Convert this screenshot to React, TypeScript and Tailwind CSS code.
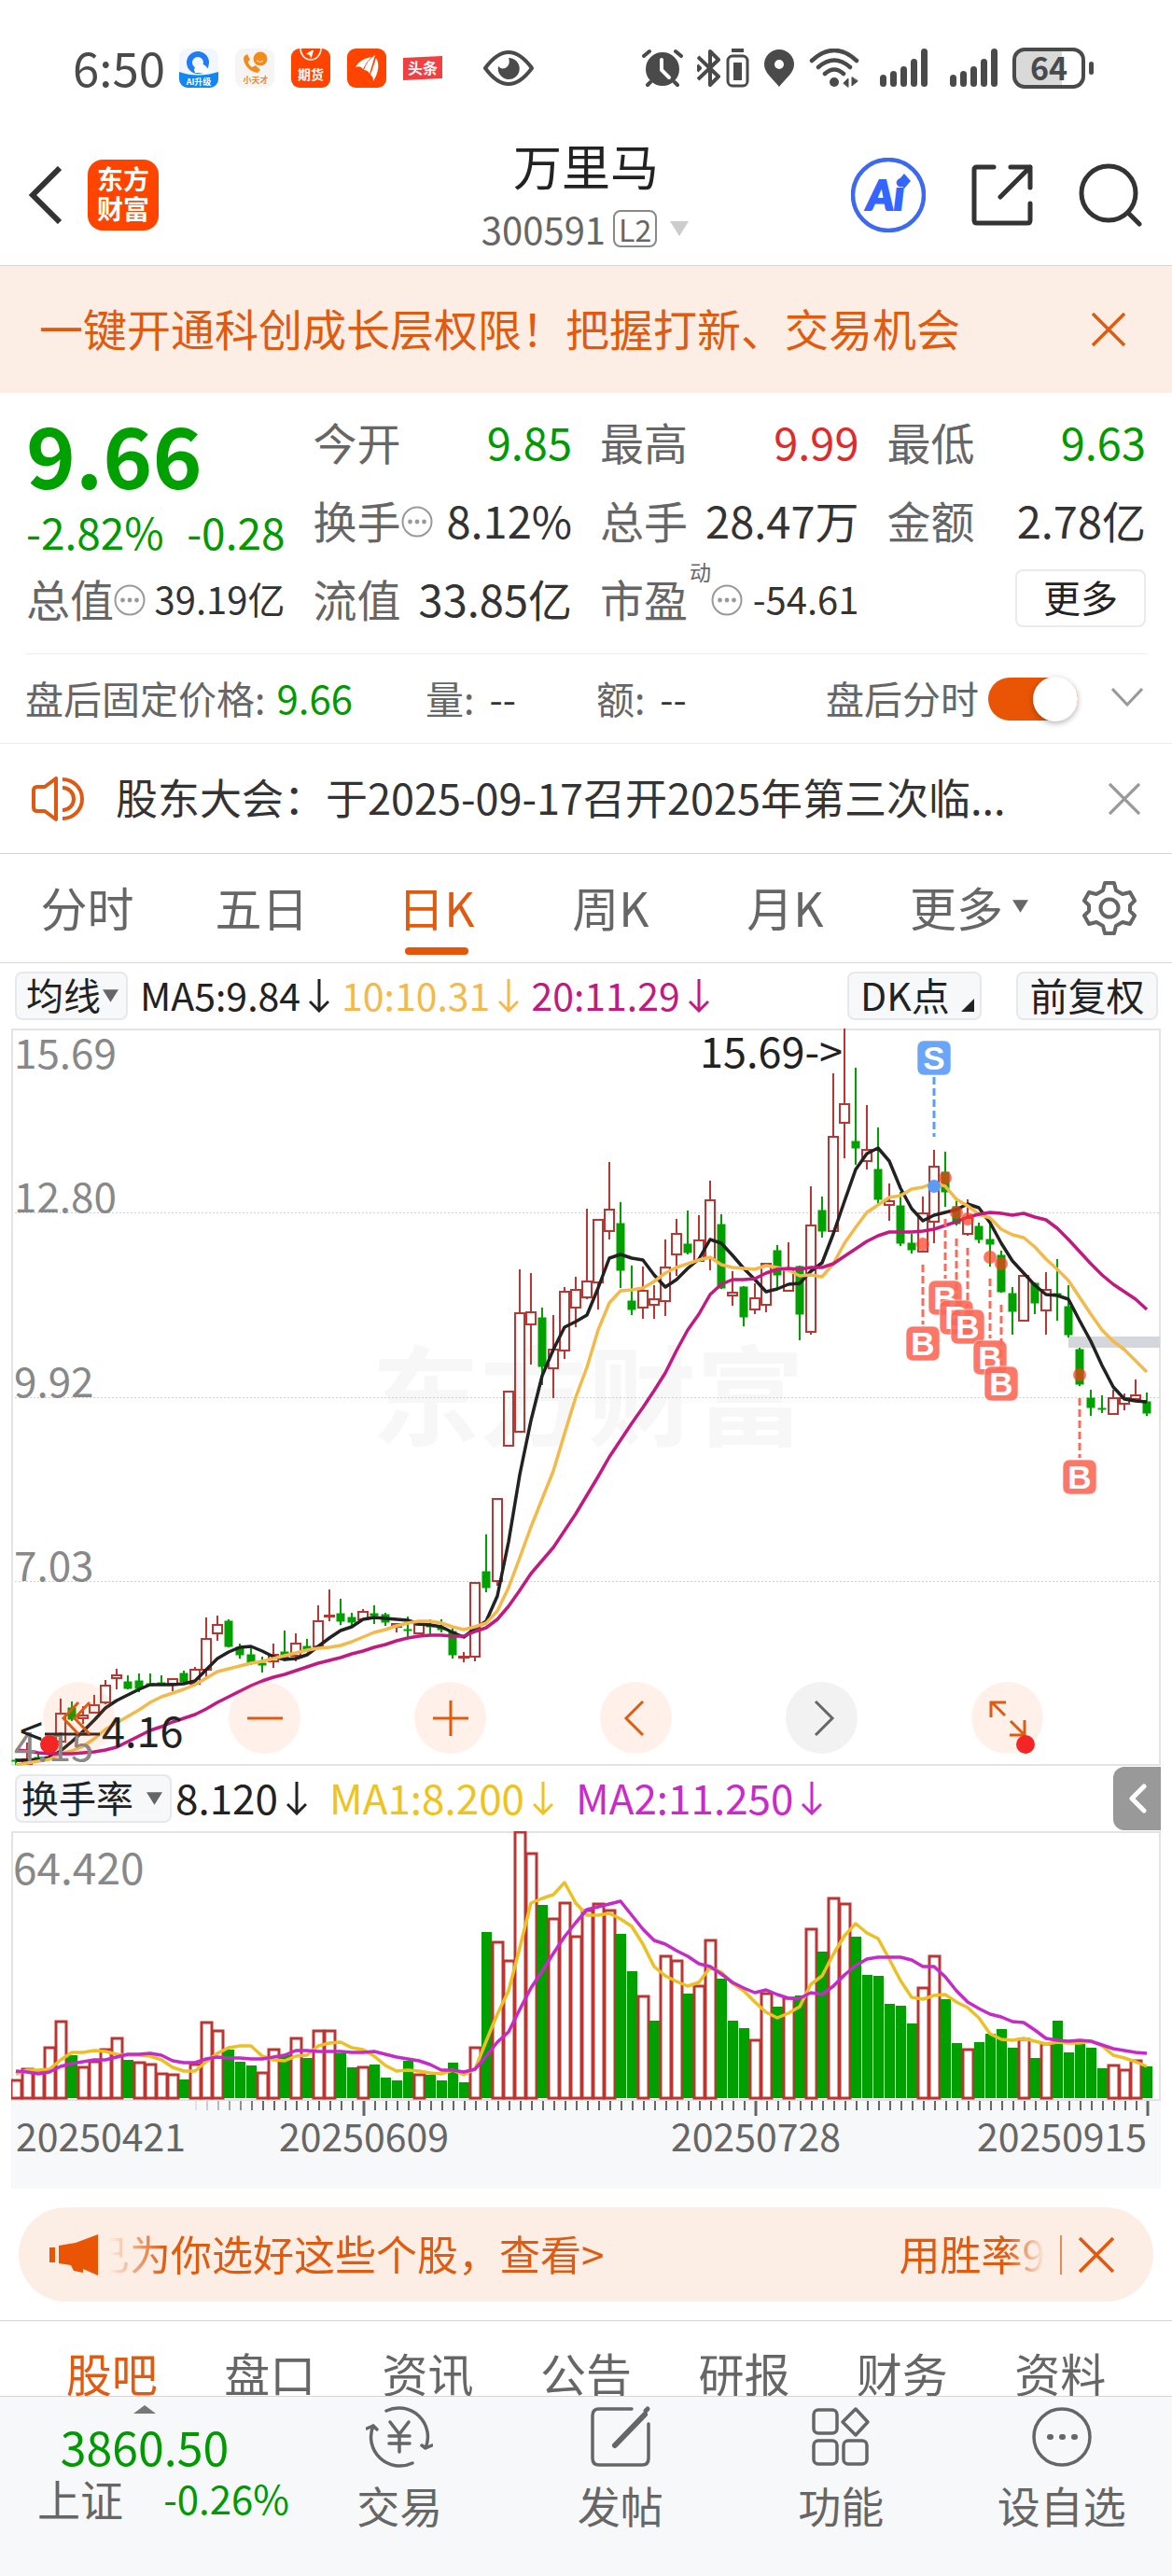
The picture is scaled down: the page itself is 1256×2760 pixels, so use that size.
import { useState, type ReactNode } from 'react';

// one row per trading day: [high, body top, body bottom, low, rising]
type Candle = [number, number, number, number, 0 | 1];

const CANDLES: Candle[] = [
  [782, 784, 785, 789, 0], [765, 783, 788, 788, 1], [777, 781, 784, 786, 0], [758, 762, 777, 780, 1],
  [718, 734, 764, 768, 1], [721, 728, 740, 742, 0], [726, 736, 739, 745, 1], [714, 725, 733, 734, 1],
  [698, 704, 722, 724, 1], [686, 693, 696, 708, 1], [693, 700, 707, 708, 0], [691, 699, 707, 711, 0],
  [691, 702, 704, 704, 0], [693, 701, 703, 704, 0], [696, 697, 702, 710, 1], [688, 691, 700, 701, 0],
  [684, 687, 702, 703, 1], [631, 654, 687, 695, 1], [629, 639, 648, 656, 1], [633, 635, 662, 663, 0],
  [659, 663, 671, 675, 0], [663, 671, 680, 682, 0], [673, 680, 682, 690, 0], [659, 671, 678, 685, 1],
  [645, 668, 675, 678, 0], [648, 659, 672, 678, 1], [654, 662, 666, 668, 0], [618, 635, 662, 663, 1],
  [601, 629, 630, 635, 1], [611, 627, 635, 639, 0], [626, 631, 636, 642, 0], [622, 625, 633, 634, 1],
  [618, 627, 629, 638, 0], [626, 628, 636, 640, 0], [637, 638, 641, 647, 1], [630, 644, 645, 652, 0],
  [637, 639, 648, 649, 1], [633, 639, 641, 649, 0], [633, 642, 644, 647, 0], [642, 646, 671, 675, 0],
  [668, 673, 674, 679, 1], [593, 594, 673, 678, 1], [542, 582, 599, 604, 0], [503, 504, 592, 597, 1],
  [389, 389, 447, 447, 1], [258, 305, 432, 432, 1], [262, 304, 317, 360, 1], [299, 310, 362, 382, 0],
  [307, 344, 364, 396, 1], [277, 282, 345, 354, 1], [266, 280, 299, 320, 1], [193, 271, 288, 290, 1],
  [205, 205, 272, 301, 1], [143, 194, 217, 226, 1], [186, 209, 259, 278, 0], [254, 292, 301, 307, 0],
  [255, 281, 299, 311, 1], [275, 290, 296, 311, 1], [226, 256, 292, 308, 1], [204, 220, 242, 265, 1],
  [195, 231, 240, 242, 0], [200, 227, 249, 250, 1], [163, 184, 246, 259, 1], [199, 210, 278, 279, 0],
  [260, 283, 286, 297, 1], [276, 277, 309, 319, 0], [273, 289, 301, 306, 1], [251, 252, 296, 304, 1],
  [232, 238, 264, 279, 0], [229, 257, 281, 282, 1], [254, 255, 306, 334, 0], [169, 211, 325, 328, 1],
  [180, 195, 217, 224, 0], [48, 116, 217, 218, 1], [0, 81, 101, 139, 1], [42, 121, 128, 146, 0],
  [82, 130, 142, 151, 1], [106, 151, 183, 189, 0], [166, 185, 189, 206, 1], [175, 190, 230, 233, 0],
  [220, 230, 237, 241, 0], [180, 198, 239, 240, 1], [130, 148, 207, 230, 1], [132, 154, 175, 191, 0],
  [181, 191, 209, 211, 0], [183, 203, 220, 222, 1], [208, 212, 226, 230, 0], [209, 226, 231, 255, 0],
  [238, 243, 282, 283, 0], [277, 284, 303, 328, 0], [264, 265, 313, 314, 1], [272, 273, 294, 306, 0],
  [261, 280, 302, 328, 1], [247, 284, 285, 313, 0], [275, 298, 328, 331, 0], [342, 344, 381, 383, 0],
  [387, 396, 406, 415, 0], [393, 407, 408, 412, 0], [387, 396, 413, 413, 1], [391, 396, 402, 409, 1],
  [376, 393, 397, 398, 1], [390, 400, 412, 415, 0],
];

const MA5 = [
  784, 784, 783, 781, 774, 764, 753, 741, 728, 720, 714, 708, 703, 703, 703, 702, 699, 687, 675, 668,
  663, 662, 667, 673, 676, 675, 671, 662, 653, 645, 641, 633, 631, 632, 633, 634, 638, 639, 641, 647,
  652, 643, 635, 608, 550, 478, 420, 372, 344, 320, 314, 307, 278, 246, 242, 246, 248, 264, 277, 269,
  257, 247, 226, 230, 243, 257, 269, 282, 279, 274, 273, 260, 251, 220, 185, 151, 134, 128, 142, 171,
  193, 206, 200, 197, 194, 188, 192, 208, 230, 249, 262, 275, 285, 286, 290, 313, 335, 361, 384, 397,
  399, 400,
];

const MA10 = [
  789, 787, 785, 783, 777, 774, 769, 761, 751, 744, 737, 730, 722, 716, 712, 708, 703, 696, 689, 686,
  683, 680, 678, 675, 672, 669, 666, 664, 663, 661, 657, 652, 647, 644, 640, 637, 635, 635, 637, 641,
  644, 641, 637, 624, 599, 567, 534, 504, 474, 434, 395, 363, 323, 294, 281, 280, 278, 271, 262, 256,
  252, 248, 245, 253, 256, 257, 258, 254, 256, 259, 265, 264, 266, 252, 230, 213, 197, 189, 181, 179,
  172, 170, 165, 169, 183, 190, 199, 203, 215, 221, 224, 234, 247, 258, 270, 288, 306, 323, 335, 344,
  356, 368,
];

const MA20 = [
  773, 774, 776, 777, 777, 777, 776, 775, 773, 770, 764, 758, 752, 748, 743, 739, 735, 729, 722, 716,
  710, 704, 699, 695, 692, 688, 684, 680, 677, 674, 670, 667, 663, 660, 656, 653, 651, 650, 650, 651,
  651, 646, 642, 633, 619, 602, 584, 570, 556, 538, 520, 500, 480, 459, 441, 423, 406, 388, 369, 345,
  323, 306, 285, 274, 269, 269, 268, 262, 258, 257, 258, 256, 256, 252, 244, 236, 228, 222, 218, 218,
  218, 217, 215, 211, 207, 202, 199, 197, 198, 200, 198, 202, 205, 214, 226, 239, 252, 264, 274, 282,
  290, 301,
];

// bar tops, negative for a falling day
const TURNOVER = [
  267, 255, 257, 232, 204, -240, 253, 247, 234, 222, -245, 248, 250, 260, 261, -266, 250, 205, 214, -234,
  -247, -251, 259, 234, -240, 222, -243, 214, 214, -238, -253, 253, -250, -264, -267, -246, 261, -261, -267, -248,
  -269, 232, -108, 119, 139, 1, 24, -79, 94, 77, 113, 85, 78, 85, -110, -150, 177, -203, 134, 139,
  -174, 166, 117, -158, -203, -211, 224, 174, -188, 179, -176, 105, -129, 72, 78, -113, -154, -155, -185, -187,
  -206, 168, 134, -180, -227, 234, -226, -217, -212, -232, 223, -243, 228, -203, -237, -228, -232, -254, 251, 256,
  246, -252,
];

const TURNOVER_MA1 = [
  260, 256, 256, 255, 245, 237, 237, 235, 236, 239, 240, 240, 241, 245, 253, 257, 257, 247, 238, 232,
  230, 230, 241, 245, 246, 241, 240, 230, 227, 226, 232, 234, 241, 251, 257, 256, 257, 259, 260, 256,
  261, 255, 225, 196, 171, 125, 77, 72, 68, 55, 77, 90, 90, 88, 94, 102, 121, 145, 155, 161,
  166, 162, 146, 151, 163, 171, 183, 194, 200, 195, 188, 164, 155, 132, 112, 99, 109, 115, 137, 160,
  178, 180, 176, 175, 183, 189, 200, 217, 223, 224, 222, 225, 228, 226, 227, 227, 225, 230, 240, 243,
  247, 252,
];

const TURNOVER_MA2 = [
  257, 258, 260, 258, 252, 249, 247, 245, 245, 242, 239, 239, 238, 240, 246, 248, 248, 244, 242, 243,
  243, 244, 244, 242, 240, 235, 235, 236, 236, 236, 237, 237, 236, 239, 242, 244, 246, 250, 256, 256,
  258, 255, 241, 226, 215, 191, 168, 150, 131, 113, 98, 84, 81, 78, 75, 90, 105, 117, 121, 128,
  134, 142, 145, 153, 162, 168, 173, 170, 175, 179, 179, 173, 175, 166, 154, 144, 137, 135, 135, 135,
  138, 145, 145, 156, 171, 183, 190, 196, 199, 204, 205, 213, 222, 224, 225, 224, 225, 229, 233, 235,
  237, 238,
];

// [day index, badge top, dot y]
const BUY_MARKS = [
  [81, 319, 231],
  [83, 270, 160],
  [84, 291, 197],
  [85, 301, 204],
  [87, 334, 245],
  [88, 362, 252],
  [95, 462, 371],
];

const RED = '#bb3633';
const GREEN = '#00a000';

const dayX = (i: number) => 5 + i * 12;

const linePoints = (values: number[]) => values.map((y, i) => `${dayX(i)},${y}`).join(' ');

const Line = ({ values, color }: { values: number[]; color: string }) => (
  <polyline points={linePoints(values)} fill="none" stroke={color} strokeWidth="3.500" strokeLinejoin="round" />
);

/* ---------- small icons ---------- */

const Cross = ({ className }: { className: string }) => (
  <svg viewBox="0 0 36 36" className={className} fill="none" stroke="currentColor" strokeWidth="3.500">
    <path d="M1 1L35 35M35 1L1 35" />
  </svg>
);

const DownArrow = () => (
  <svg viewBox="0 0 22 36" className="h-9 w-[22px]" fill="none" stroke="currentColor" strokeWidth="3">
    <path d="M11 0V34M1 24L11 34L21 24" />
  </svg>
);

const Caret = ({ className }: { className: string }) => (
  <svg viewBox="0 0 20 16" className={className} fill="currentColor">
    <path d="M0 0H20L10 16Z" />
  </svg>
);

const InfoDots = () => (
  <svg viewBox="0 0 34 34" className="mt-1 size-[34px] shrink-0 text-[#999]" fill="currentColor">
    <circle cx="17" cy="17" r="15.500" fill="none" stroke="currentColor" strokeWidth="2" />
    <circle cx="9.500" cy="17" r="2.400" />
    <circle cx="17" cy="17" r="2.400" />
    <circle cx="24.500" cy="17" r="2.400" />
  </svg>
);

const Signal = () => (
  <svg viewBox="0 0 52 42" className="h-[42px] w-[52px]" fill="currentColor">
    <rect x="0" y="28" width="7" height="13" rx="3.500" />
    <rect x="11" y="24" width="7" height="17" rx="3.500" />
    <rect x="22" y="19" width="7" height="22" rx="3.500" />
    <rect x="33" y="11" width="7" height="30" rx="3.500" />
    <rect x="44" y="0" width="7" height="41" rx="3.500" />
  </svg>
);

const StatusBar = () => (
  <div className="flex h-[98px] items-center justify-between pt-[48px] pr-[84px] pl-[78px] text-[#4a4a4a]">
    <div className="flex items-center">
      <span className="w-[114px] pb-1 text-[51px] leading-[50px]">6:50</span>
      <div className="flex items-center gap-[18px]">
        <svg viewBox="0 0 42 42" className="size-[42px]">
          <rect width="42" height="42" rx="9" fill="#f2f7ff" />
          <circle cx="20" cy="15" r="9" fill="none" stroke="#1f7cf5" strokeWidth="6" />
          <path d="M17 26a5 5 0 0 1 4-8 6 6 0 0 1 9 3 4 4 0 0 1 1 5z" fill="#fff" />
          <path d="M0 25Q20 32 42 25V33a9 9 0 0 1-9 9H9a9 9 0 0 1-9-9z" fill="#1287f2" />
          <text x="21" y="39" fontSize="9" fontWeight="700" fill="#fff" textAnchor="middle">AI升级</text>
        </svg>
        <svg viewBox="0 0 42 42" className="size-[42px]">
          <rect width="42" height="42" rx="9" fill="#f6f5f4" />
          <path d="M10 8c-3 4 2 16 14 18l3-3-5-5-4 2c-2-1-4-4-4-6l2-2-3-6z" fill="#f28a1c" />
          <circle cx="27" cy="11" r="7.500" fill="#f28a1c" />
          <path d="M23 13q4 3 7 0" stroke="#fff" fill="none" />
          <text x="22" y="37" fontSize="9" fontWeight="700" fill="#f28a1c" textAnchor="middle">小天才</text>
        </svg>
        <svg viewBox="0 0 42 42" className="size-[42px]">
          <rect width="42" height="42" rx="9" fill="#ff4400" />
          <path d="M10 0a11 12 0 0 0 22 0" fill="none" stroke="#fff" strokeWidth="1.500" />
          <path d="M16 6q7-5 8-4-2 8-3 9 0-5-5-5" fill="#fff" />
          <text x="21" y="33" fontSize="14" fontWeight="700" fill="#fff" textAnchor="middle">期货</text>
        </svg>
        <svg viewBox="0 0 42 42" className="size-[42px]">
          <rect width="42" height="42" rx="9" fill="#ff4400" />
          <path d="M9 20Q12 12 26 9Q20 15 17 22Q14 18 9 20zM18 23Q21 13 30 7Q27 17 24 27Q22 23 18 23zM25 28Q29 17 31 10Q37 20 28 35Q28 30 25 28z" fill="#fff" />
        </svg>
        <svg viewBox="0 0 42 42" className="size-[42px]">
          <path d="M0 10L42 8V32L0 34z" fill="#f04142" />
          <text x="21" y="27" fontSize="16" fontWeight="700" fill="#fff" textAnchor="middle">头条</text>
        </svg>
      </div>
      <svg viewBox="0 0 54 38" className="ml-[44px] h-[38px] w-[54px]">
        <path d="M2 19Q27-15 52 19Q27 53 2 19z" fill="none" stroke="currentColor" strokeWidth="4" strokeLinejoin="round" />
        <path d="M27 8a11.500 11.500 0 1 1-11 9q5 5 10 0 3-4 1-9z" fill="currentColor" />
      </svg>
    </div>

    <div className="flex items-center">
      <svg viewBox="0 0 44 42" className="h-[42px] w-[44px]" fill="none" stroke="currentColor" strokeWidth="4" strokeLinecap="round">
        <circle cx="22" cy="22" r="17" fill="currentColor" strokeWidth="2" />
        <path d="M2 8L8 3M42 8L36 3M9 36L6 39M35 36L38 39" />
        <path d="M21 12V23L29 31" stroke="#fff" strokeWidth="4" />
      </svg>
      <svg viewBox="0 0 26 42" className="ml-[15px] h-[42px] w-[26px]" fill="none" stroke="currentColor" strokeWidth="4" strokeLinejoin="round">
        <path d="M1 9L23 30L14 39V3L23 12L1 33" />
        <path d="M0 18L3 21L0 24" />
      </svg>
      <svg viewBox="0 0 26 42" className="ml-[5px] h-[42px] w-[26px]" fill="none" stroke="currentColor" strokeWidth="3">
        <rect x="2" y="8" width="21" height="32" rx="5" />
        <path d="M6 2H19" strokeWidth="4" />
        <rect x="8" y="15" width="9" height="19" fill="currentColor" stroke="none" />
      </svg>
      <svg viewBox="0 0 34 42" className="ml-[14px] h-[42px] w-[34px]">
        <path fillRule="evenodd" d="M17 1a16 16 0 0 1 16 16c0 9-9 15-16 24C10 32 1 26 1 17A16 16 0 0 1 17 1zm0 11a5 5 0 1 0 0 10 5 5 0 0 0 0-10z" fill="currentColor" />
      </svg>
      <svg viewBox="0 0 54 42" className="ml-[15px] h-[42px] w-[54px]" fill="none" stroke="currentColor" strokeWidth="4.500" strokeLinecap="round">
        <path d="M3 13Q27-9 51 13M10 20Q27 5 44 20M17 27Q27 18 37 27" />
        <circle cx="27" cy="36" r="5" fill="currentColor" stroke="none" />
        <path d="M42 41V32L37 37zM46 31V40L52 35z" fill="currentColor" strokeWidth="1" />
      </svg>
      <div className="ml-[22px] flex gap-[23px]">
        <Signal />
        <Signal />
      </div>
      <div className="ml-[15px] flex items-center gap-1">
        <div className="flex h-[44px] w-[78px] items-center justify-center rounded-[13px] border-4 border-[#4a4a4a] bg-linear-to-r from-[#d9d9d9] from-70% to-white to-70% pb-[2px] text-[34px] leading-[34px] font-bold">
          64
        </div>
        <div className="h-[14px] w-[5px] rounded-full bg-[#4a4a4a]" />
      </div>
    </div>
  </div>
);

const Header = () => (
  <header className="grid h-[187px] grid-cols-[1fr_auto_1fr] items-center border-b border-[#d5d5d5] pt-[36px] text-[#333]">
    <div className="flex items-center pl-[30px]">
      <button type="button" aria-label="返回">
        <svg viewBox="0 0 36 62" className="h-[62px] w-9" fill="none" stroke="currentColor" strokeWidth="6">
          <path d="M34 2L5 31L34 60" />
        </svg>
      </button>
      <a href="#home" className="ml-7 flex size-[76px] flex-col items-center justify-center rounded-2xl bg-[#ff4400] pb-1 text-[28px] leading-[32px] font-bold text-white">
        <span>东方</span>
        <span>财富</span>
      </a>
    </div>

    <div className="flex flex-col items-center gap-3 pb-1">
      <h1 className="text-[52px] leading-[64px] text-[#222]">万里马</h1>
      <button type="button" className="flex items-center text-[40px] leading-[48px] text-[#666]">
        300591
        <span className="ml-2 rounded-lg border-2 border-[#888] px-1 text-[32px] leading-[36px]">L2</span>
        <Caret className="ml-3 h-4 w-6 text-[#ccc]" />
      </button>
    </div>

    <div className="flex items-center justify-end gap-[49px] pr-[32px]">
      <button type="button" aria-label="AI">
        <svg viewBox="0 0 80 80" className="size-20">
          <circle cx="40" cy="40" r="38" fill="none" stroke="#3d68f0" strokeWidth="4.500" />
          <text x="37" y="56" fontSize="44" fontWeight="900" fontStyle="italic" fill="#3366ff" stroke="#3366ff" strokeWidth="2" textAnchor="middle" fontFamily="Lato, sans-serif">Ai</text>
          <path d="M57 17L64 25L57 33L50 25z" fill="#3366ff" />
        </svg>
      </button>
      <button type="button" aria-label="分享">
        <svg viewBox="0 0 66 66" className="size-[66px]" fill="none" stroke="currentColor" strokeWidth="5" strokeLinecap="round" strokeLinejoin="round">
          <path d="M24 3H6Q3 3 3 6V60Q3 63 6 63H60Q63 63 63 60V42M42 3H63V25M63 3L31 35" />
        </svg>
      </button>
      <button type="button" aria-label="搜索">
        <svg viewBox="0 0 68 68" className="size-[68px]" fill="none" stroke="currentColor" strokeWidth="5" strokeLinecap="round">
          <circle cx="32" cy="32" r="29" />
          <path d="M53 53L65 65" />
        </svg>
      </button>
    </div>
  </header>
);

const Banner = () => (
  <div className="flex h-[136px] items-center justify-between bg-[#fceee5] pr-[50px] pl-[42px] text-[#e05a10]">
    <a href="#growth" className="pb-1 text-[47px] leading-[60px] whitespace-nowrap">
      一键开通科创成长层权限！把握打新、交易机会
    </a>
    <button type="button" aria-label="关闭">
      <Cross className="size-9" />
    </button>
  </div>
);

/* ---------- quote ---------- */

interface QuoteCellProps {
  label: string;
  value: string;
  sup?: string;
  info?: boolean;
  small?: boolean;
  tone?: string;
}

const QuoteCell = ({ label, value, sup, info, small, tone = 'text-[#333]' }: QuoteCellProps) => (
  <div className="flex h-[84px] items-center justify-between whitespace-nowrap">
    <dt className="flex items-center text-[47px] leading-[60px] text-[#666]">
      {label}
      {sup && <sup className="-mt-9 ml-[2px] text-[23px] leading-[24px]">{sup}</sup>}
      {info && <InfoDots />}
    </dt>
    <dd className={`${tone} ${small ? 'text-[40px]' : 'text-[47px]'} leading-[60px]`}>{value}</dd>
  </div>
);

const Quote = () => (
  <section className="px-[28px]">
    <div className="grid grid-cols-4 gap-x-[30px] pt-[10px] pb-[17px]">
      <div>
        <p className="h-[108px] text-[90px] leading-[108px] font-bold text-[#00a000]">9.66</p>
        <p className="flex h-[60px] items-center justify-between text-[46px] leading-[60px] text-[#009a00]">
          <span>-2.82%</span>
          <span>-0.28</span>
        </p>
        <dl>
          <QuoteCell label="总值" info value="39.19亿" small />
        </dl>
      </div>
      <dl>
        <QuoteCell label="今开" value="9.85" tone="text-[#009a00]" />
        <QuoteCell label="换手" info value="8.12%" />
        <QuoteCell label="流值" value="33.85亿" />
      </dl>
      <dl>
        <QuoteCell label="最高" value="9.99" tone="text-[#dd2c2c]" />
        <QuoteCell label="总手" value="28.47万" />
        <QuoteCell label="市盈" sup="动" info value="-54.61" small />
      </dl>
      <div>
        <dl>
          <QuoteCell label="最低" value="9.63" tone="text-[#009a00]" />
          <QuoteCell label="金额" value="2.78亿" />
        </dl>
        <div className="flex h-[84px] items-center justify-end">
          <button type="button" className="h-[62px] w-[140px] rounded-lg border-2 border-[#e8eaec] pb-1 text-[40px] leading-[52px] text-[#222]">
            更多
          </button>
        </div>
      </div>
    </div>
  </section>
);

const AfterHours = () => {
  const [on, setOn] = useState(true);

  return (
    <section className="border-b border-[#ececec] text-[41px] leading-[60px] whitespace-nowrap text-[#666]">
      <div className="mx-[27px] flex h-[96px] items-center border-t border-[#ececec] pb-1">
        <span>盘后固定价格:</span>
        <span className="ml-3 text-[42px] text-[#009a00]">9.66</span>
        <span className="ml-[78px]">量:</span>
        <span className="ml-4 text-[#333]">--</span>
        <span className="ml-[86px]">额:</span>
        <span className="ml-4 text-[#333]">--</span>
        <label className="ml-auto flex items-center gap-[10px]">
          盘后分时
          <span className="relative mt-1 flex h-[46px] w-[96px] items-center">
            <input
              type="checkbox"
              checked={on}
              onChange={() => setOn(!on)}
              className="peer h-[46px] w-full appearance-none rounded-full bg-gray-300 checked:bg-[#e95504]"
            />
            <span className="pointer-events-none absolute left-0 size-[48px] rounded-full bg-white shadow-[0_2px_6px_rgba(0,0,0,0.3)] peer-checked:right-0 peer-checked:left-auto" />
          </span>
        </label>
        <button type="button" aria-label="展开" className="mr-1 ml-[36px]">
          <svg viewBox="0 0 34 20" className="h-5 w-[34px] text-[#999]" fill="none" stroke="currentColor" strokeWidth="3">
            <path d="M1 1L17 18L33 1" />
          </svg>
        </button>
      </div>
    </section>
  );
};

const Notice = () => (
  <section className="flex h-[118px] items-center border-b border-[#d5d5d5] pr-[34px] pl-[33px]">
    <svg viewBox="0 0 58 48" className="h-12 w-[58px] text-[#dc5a14]" fill="none" stroke="currentColor" strokeWidth="4" strokeLinejoin="round">
      <path d="M27 2V46L15 37H7Q3 37 3 33V15Q3 11 7 11H15z" />
      <path d="M34 12a12 12 0 0 1 0 24M34 3a21 21 0 0 1 0 42" />
    </svg>
    <a href="#notice" className="ml-[33px] pb-1 text-[45px] leading-[60px] whitespace-nowrap text-[#333]">
      股东大会：于2025-09-17召开2025年第三次临...
    </a>
    <button type="button" aria-label="关闭" className="ml-auto text-[#999]">
      <Cross className="size-[34px]" />
    </button>
  </section>
);

/* ---------- chart ---------- */

const PERIODS = ['分时', '五日', '日K', '周K', '月K'];

const PeriodTabs = () => {
  const [active, setActive] = useState('日K');

  return (
    <nav className="grid h-[117px] grid-cols-[repeat(6,187fr)_134fr] border-b border-[#d5d5d5] text-[50px] leading-[60px] text-[#666]">
      {PERIODS.map((p) => (
        <button
          key={p}
          type="button"
          onClick={() => setActive(p)}
          className={`flex flex-col items-center pt-[26px] whitespace-nowrap ${p === active ? 'text-[#e05a10]' : ''}`}
        >
          {p}
          {p === active && <span className="mt-[14px] h-2 w-[68px] rounded-full bg-[#e55608]" />}
        </button>
      ))}
      <button type="button" className="flex items-center justify-center gap-[10px] pb-1 pl-5 whitespace-nowrap">
        更多
        <Caret className="h-[14px] w-[17px]" />
      </button>
      <button type="button" aria-label="设置" className="flex items-center justify-center">
        <svg viewBox="0 0 58 58" className="size-[58px]" fill="none" stroke="currentColor" strokeWidth="4" strokeLinejoin="round">
          <path d="M24 2H34L36 10L43 14L51 12L56 21L51 26V32L56 37L51 46L43 44L36 48L34 56H24L22 48L15 44L7 46L2 37L7 32V26L2 21L7 12L15 14L22 10z" />
          <circle cx="29" cy="29" r="9.500" />
        </svg>
      </button>
    </nav>
  );
};

const IndicatorSelect = ({ label, options, className }: { label: string; options: string[]; className: string }) => (
  <label className={`relative flex h-[52px] items-center rounded-lg border-2 border-[#e6e8eb] bg-[#f7f8fa] text-[40px] text-[#222] ${className}`}>
    <select aria-label={label} className="h-full w-full appearance-none bg-transparent pb-1 leading-[44px] outline-none">
      {options.map((o) => (
        <option key={o}>{o}</option>
      ))}
    </select>
    <Caret className="pointer-events-none absolute right-2 h-[14px] w-[17px] text-[#666]" />
  </label>
);

const Reading = ({ color, children }: { color: string; children: ReactNode }) => (
  <span className={`flex items-center gap-[9px] ${color}`}>
    <span className="pb-1">{children}</span>
    <DownArrow />
  </span>
);

const PriceHeader = () => (
  <div className="flex h-[70px] items-center pr-[15px] pl-[16px] text-[41px] leading-[52px] whitespace-nowrap">
    <IndicatorSelect label="主图指标" options={['均线', '布林']} className="w-[121px] pl-[10px]" />
    <div className="ml-[13px] flex gap-[13px]">
      <Reading color="text-[#222]">MA5:9.84</Reading>
      <Reading color="text-[#f3ba4b]">10:10.31</Reading>
      <Reading color="text-[#c21a80]">20:11.29</Reading>
    </div>
    <button type="button" className="ml-auto flex h-[52px] w-[144px] items-center rounded-lg border-2 border-[#e6e8eb] bg-[#f7f8fa] pl-3 text-[41px] leading-[44px] text-[#222]">
      <span className="pb-1">DK点</span>
      <svg viewBox="0 0 14 14" className="mt-5 ml-3 size-[14px] shrink-0" fill="currentColor">
        <path d="M14 0V14H0z" />
      </svg>
    </button>
    <button type="button" className="ml-[37px] h-[52px] w-[152px] rounded-lg border-2 border-[#e6e8eb] bg-[#f7f8fa] pb-1 text-[41px] leading-[44px] text-[#222]">
      前复权
    </button>
  </div>
);

const TradeMark = ({ day, top, dot, kind }: { day: number; top: number; dot: number; kind: 'B' | 'S' }) => {
  const x = dayX(day);
  const color = kind === 'B' ? '#fb6a58' : '#5a9cf8';
  const [from, to] = kind === 'B' ? [top - 66, top - 2] : [top + 39, top + 103];

  return (
    <g>
      <path d={`M${x} ${from}V${to}`} stroke={color} strokeWidth="3" strokeDasharray="8 4" />
      <circle cx={x} cy={dot} r="7" fill={kind === 'B' ? '#ff3b1f' : color} opacity={kind === 'B' ? 0.7 : 1} />
      <rect x={x - 18} y={top} width="36" height="37" rx="7" fill={color} stroke="#fff" strokeOpacity="0.6" opacity="0.9" />
      <text x={x} y={top + 31} fontSize="35" fontWeight="700" fill="#fff" textAnchor="middle" fontFamily="Liberation Sans, sans-serif">
        {kind}
      </text>
    </g>
  );
};

const PriceChart = () => (
  <svg viewBox="0 0 1232 790" className="block w-full">
    <g fontSize="116" fontWeight="700" fill="#f7f7f7">
      <text x="386" y="438">东方财富</text>
    </g>
    {[197, 395, 592].map((y) => (
      <path key={y} d={`M0 ${y}.500H1232`} stroke="#d0d0d0" strokeDasharray="2 2" />
    ))}
    <path d="M1 0V790M1231 0V790M0 1H1232M0 789H1232" stroke="#e3e3e3" strokeWidth="2" />
    <rect x="1133" y="330" width="98" height="12" fill="#d3d7dc" />

    {CANDLES.map(([high, top, bottom, low, up], i) => {
      const x = dayX(i);
      const color = up ? RED : GREEN;
      return (
        <g key={i} stroke={color} strokeWidth="2">
          <path d={`M${x} ${high}V${top}M${x} ${bottom}V${low}`} />
          {up ? (
            <rect x={x - 5} y={top} width="10" height={Math.max(bottom - top, 1)} fill="none" />
          ) : (
            <rect x={x - 4} y={top} width="8" height={Math.max(bottom - top, 1)} fill={color} strokeWidth="1" />
          )}
        </g>
      );
    })}

    <Line values={MA5} color="#222" />
    <Line values={MA10} color="#f3ba4b" />
    <Line values={MA20} color="#c21a80" />

    <g fontSize="44" fill="#888">
      <text x="3" y="43">15.69</text>
      <text x="3" y="197">12.80</text>
      <text x="3" y="395">9.92</text>
      <text x="3" y="592">7.03</text>
      <text x="3" y="785">4.15</text>
    </g>

    {BUY_MARKS.map(([day, top, dot]) => (
      <TradeMark key={day} day={day} top={top} dot={dot} kind="B" />
    ))}
    <TradeMark day={82} top={13} dot={169} kind="S" />

    <g fontSize="45" fill="#222">
      <text x="891" y="42" textAnchor="end">15.69-&gt;</text>
      <text x="9" y="770">&lt;</text>
      <path d="M36 756H95" stroke="#222" strokeWidth="3" />
      <text x="97" y="770">4.16</text>
    </g>
  </svg>
);

const RoundButton = ({ label, muted, children }: { label: string; muted?: boolean; children: ReactNode }) => (
  <button
    type="button"
    aria-label={label}
    className={`relative flex size-[77px] items-center justify-center rounded-full ${muted ? 'bg-[#f2f2f2] text-[#666]' : 'bg-[#ff7832]/10 text-[#e05a10]'}`}
  >
    <svg viewBox="0 0 40 40" className="size-10" fill="none" stroke="currentColor" strokeWidth="3">
      {children}
    </svg>
  </button>
);

const ChartControls = () => (
  <div className="absolute bottom-[13px] left-[2.800%] flex w-[87%] justify-between">
    <div className="relative">
      <RoundButton label="最早">
        <path d="M19 3L3 20L19 37M31 3L15 20L31 37" />
      </RoundButton>
      <span className="absolute bottom-0 -left-[3px] size-5 rounded-full bg-[#f42525]" />
    </div>
    <RoundButton label="缩小">
      <path d="M1 20H39" />
    </RoundButton>
    <RoundButton label="放大">
      <path d="M1 20H39M20 1V39" />
    </RoundButton>
    <RoundButton label="左移">
      <path d="M27 2L9 20L27 38" />
    </RoundButton>
    <RoundButton label="右移" muted>
      <path d="M13 2L31 20L13 38" />
    </RoundButton>
    <div className="relative">
      <RoundButton label="全屏">
        <path d="M2 19V3H18M3 3L17 17M38 22V38H22M38 38L23 23" />
      </RoundButton>
      <span className="absolute right-[9px] bottom-0 size-5 rounded-full bg-[#f42525]" />
    </div>
  </div>
);

const TurnoverHeader = () => (
  <div className="flex h-[70px] items-center pr-[12px] pl-[16px] text-[44px] leading-[52px] whitespace-nowrap">
    <IndicatorSelect label="副图指标" options={['换手率', '成交量']} className="w-[168px] pl-[5px]" />
    <div className="ml-1 flex gap-6">
      <Reading color="text-[#222]">8.120</Reading>
      <Reading color="text-[#efc31f]">MA1:8.200</Reading>
      <Reading color="text-[#cb2acb]">MA2:11.250</Reading>
    </div>
    <button type="button" aria-label="展开侧栏" className="ml-auto flex h-[68px] w-[51px] items-center justify-center rounded-l-xl bg-[#999] text-white">
      <svg viewBox="0 0 20 32" className="h-8 w-5" fill="none" stroke="currentColor" strokeWidth="5" strokeLinecap="round" strokeLinejoin="round">
        <path d="M17 3L4 16L17 29" />
      </svg>
    </button>
  </div>
);

const MAJOR_TICKS = [31, 66, 101];

const TurnoverChart = () => (
  <svg viewBox="0 0 1232 383" className="block w-full">
    <rect y="288" width="1232" height="95" fill="#f7f8fa" />
    <path d="M1 0V288M1231 0V288M0 1H1232M0 288H1232" stroke="#e3e3e3" strokeWidth="2" />
    <text x="2" y="57" fontSize="46" fill="#888">64.420</text>

    {TURNOVER.map((v, i) =>
      v > 0 ? (
        <rect key={i} x={dayX(i) - 5} y={v} width="11" height={286 - v} fill="#fff" stroke={RED} strokeWidth="3" />
      ) : (
        <rect key={i} x={dayX(i) - 5} y={-v} width="11" height={286 + v} fill={GREEN} />
      ),
    )}
    <Line values={TURNOVER_MA1} color="#ecc024" />
    <Line values={TURNOVER_MA2} color="#c42bc8" />

    {TURNOVER.map((_, i) => {
      if (i < 16) return null;
      const major = MAJOR_TICKS.includes(i);
      return (
        <path
          key={i}
          d={`M${dayX(i) + 1} 289V${major ? 305 : 299}`}
          stroke="#666"
          strokeWidth={major ? 3 : 2}
          opacity={i < 22 ? (i - 15) / 7 : 1}
        />
      );
    })}
    <g fontSize="41" fill="#666">
      <text x="5" y="343">20250421</text>
      <text x="378" y="343" textAnchor="middle">20250609</text>
      <text x="798" y="343" textAnchor="middle">20250728</text>
      <text x="1217" y="343" textAnchor="end">20250915</text>
    </g>
  </svg>
);

/* ---------- bottom ---------- */

const Promo = () => (
  <section className="border-b border-[#d5d5d5] px-5 py-5">
    <div className="flex h-[101px] items-center rounded-full bg-[#fceee5] pr-[42px] pl-[33px] text-[#e05a10]">
      <svg viewBox="0 0 52 44" className="h-11 w-[52px] shrink-0" fill="#ea5504">
        <path d="M0 14H6V30H0zM10 12L28 9L52 0V44L36 37V41L26 39L23 33L10 31z" />
      </svg>
      <div className="ml-3 flex min-w-0 flex-1 justify-between overflow-hidden pb-1 text-[44px] leading-[60px] whitespace-nowrap [mask-image:linear-gradient(to_right,transparent,black_60px,black_calc(100%-40px),transparent)]">
        <a href="#picks" className="-ml-[22px]">已为你选好这些个股，查看&gt;</a>
        <a href="#winrate">用胜率9</a>
      </div>
      <span className="ml-4 h-[42px] w-[2px] bg-[#e58a58]" />
      <button type="button" aria-label="关闭" className="ml-[18px]">
        <Cross className="size-[38px]" />
      </button>
    </div>
  </section>
);

const SECTIONS = ['股吧', '盘口', '资讯', '公告', '研报', '财务', '资料'];

const SectionTabs = () => (
  <nav className="grid h-[80px] grid-cols-7 overflow-hidden px-[35px] pt-[25px] text-[49px] leading-[60px] whitespace-nowrap text-[#666]">
    {SECTIONS.map((s, i) => (
      <button key={s} type="button" className={`h-[60px] ${i === 0 ? 'text-[#e05a10]' : ''}`}>
        {s}
      </button>
    ))}
  </nav>
);

const FooterButton = ({ label, children }: { label: string; children: ReactNode }) => (
  <button type="button" className="flex flex-1 flex-col items-center pt-[9px] text-[46px] leading-[60px] whitespace-nowrap text-[#666]">
    <svg viewBox="0 0 72 68" className="mb-2 h-[68px] w-[72px]" fill="none" stroke="currentColor" strokeWidth="3.500" strokeLinecap="round" strokeLinejoin="round">
      {children}
    </svg>
    {label}
  </button>
);

const Footer = () => (
  <footer className="flex h-[193px] border-t border-[#d5d5d5] bg-[#f7f8fa]">
    <a href="#index" className="flex w-[310px] flex-col items-center pt-[9px] whitespace-nowrap">
      <svg viewBox="0 0 24 9" className="h-[9px] w-6" fill="#777">
        <path d="M12 0L24 9H0z" />
      </svg>
      <span className="mt-[6px] text-[50px] leading-[56px] text-[#009a00]">3860.50</span>
      <span className="flex w-full items-center justify-between pl-[40px] leading-[56px]">
        <span className="text-[46px] text-[#666]">上证</span>
        <span className="text-[42px] text-[#009a00]">-0.26%</span>
      </span>
    </a>
    <FooterButton label="交易">
      <path d="M22 6A31 31 0 0 1 64 46M64 46L60 43M64 46L71 43M50 62A31 31 0 0 1 8 22M8 22L1 25M8 22L12 26" />
      <path d="M26 18L36 31L46 18M36 31V50M25 33H47M25 41H47" />
    </FooterButton>
    <FooterButton label="发帖">
      <path d="M48 4H13Q6 4 6 11V57Q6 64 13 64H59Q66 64 66 57V20" />
      <path d="M30 43L62 10" strokeWidth="6" />
      <path d="M63 6L65 4" strokeWidth="5" />
    </FooterButton>
    <FooterButton label="功能">
      <rect x="7" y="5" width="25" height="25" rx="5" />
      <rect x="7" y="38" width="25" height="25" rx="5" />
      <rect x="39" y="38" width="25" height="25" rx="5" />
      <path d="M52 4L65 18L52 32L38 18z" />
    </FooterButton>
    <FooterButton label="设自选">
      <circle cx="36" cy="34" r="30" />
      <path d="M23 34H24M36 34H37M49 34H50" strokeWidth="6" />
    </FooterButton>
  </footer>
);

export default function App() {
  return (
    <div className="min-w-[1200px] bg-white font-['Noto_Sans_CJK_SC',sans-serif]">
      <StatusBar />
      <Header />
      <Banner />
      <main>
        <Quote />
        <AfterHours />
        <Notice />
        <PeriodTabs />
        <PriceHeader />
        <div className="relative mx-3">
          <PriceChart />
          <ChartControls />
        </div>
        <TurnoverHeader />
        <div className="mx-3">
          <TurnoverChart />
        </div>
        <Promo />
        <SectionTabs />
      </main>
      <Footer />
    </div>
  );
}
